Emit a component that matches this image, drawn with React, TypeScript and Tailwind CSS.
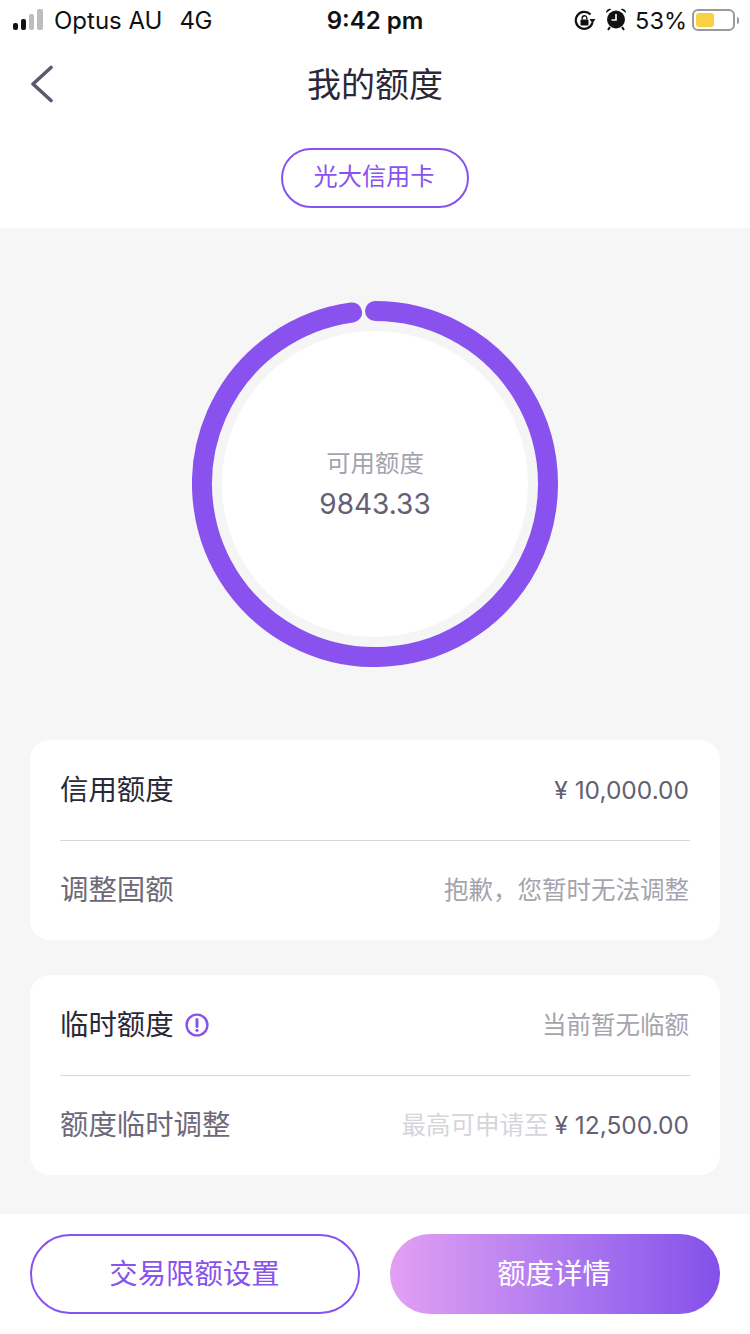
import React from "react";

const F = "font-['Inter','Noto_Sans_CJK_SC',sans-serif]";

function Ring() {
  const r = 173, c = 183;
  const a = (7.6 * Math.PI) / 180;
  const ex = c - r * Math.sin(a), ey = c - r * Math.cos(a);
  return (
    <div className="relative w-[366px] h-[366px] shrink-0 rounded-full bg-[#f5f5f5]">
      <svg width="366" height="366" viewBox="0 0 366 366" className="absolute inset-0">
        <path d={`M ${c} ${c - r} A ${r} ${r} 0 1 1 ${ex} ${ey}`} fill="none" stroke="#8952ee" strokeWidth="20" strokeLinecap="round" />
      </svg>
      <div className="absolute left-[30px] top-[30px] w-[306px] h-[306px] rounded-full bg-white flex flex-col items-center pt-[115px]">
        <div className="text-[24.4px] leading-[34px] text-[#a5a3ad]">可用额度</div>
        <div className="text-[28px] leading-[34px] mt-[7px] text-[#645f75]">9843.33</div>
      </div>
    </div>
  );
}

function Row({ left, right, muted, h }: { left: React.ReactNode; right: React.ReactNode; muted?: boolean; h: string }) {
  return (
    <div className={`${h} flex items-center justify-between`}>
      <div className={`text-[28.4px] flex items-center ${muted ? "text-[#6d6979]" : "text-[#2b2838]"}`}>{left}</div>
      <div className="text-[24.5px] flex items-center pr-px">{right}</div>
    </div>
  );
}

export default function App() {
  return (
    <div className={`${F} w-[750px] h-[1334px] bg-[#f6f6f6] flex flex-col overflow-hidden`}>
      <div className="bg-white h-[228px] shrink-0 flex flex-col">
        <div className="h-[40px] pt-[1px] pl-[13px] pr-[11px] flex items-center relative text-[24px] text-[#111]">
          <svg width="34" height="22" viewBox="0 0 34 22" className="shrink-0 -mt-[1px]">
            <rect x="0" y="14" width="5" height="7" rx="2" fill="#111" />
            <rect x="8" y="10" width="5" height="11" rx="2" fill="#111" />
            <rect x="16" y="5" width="5" height="16" rx="2" fill="#bdbdbd" />
            <rect x="24" y="0" width="6" height="21" rx="2" fill="#bdbdbd" />
          </svg>
          <span className="ml-[7px]">Optus AU</span>
          <span className="ml-[17px] tracking-[-0.5px]">4G</span>
          <span className="absolute left-0 right-0 text-center font-semibold pointer-events-none">9:42 pm</span>
          <div className="ml-auto flex items-center">
            <svg width="22" height="22" viewBox="0 0 22 22">
              <path d="M18.5 12.5 A8.5 8.5 0 1 1 16.5 4.5" fill="none" stroke="#111" strokeWidth="2.2" />
              <path d="M21.5 9 L15.5 9 L18.5 13.5 Z" fill="#111" />
              <rect x="6.5" y="9.5" width="8" height="6" rx="1" fill="#111" />
              <path d="M8.2 9.5 V8 a2.3 2.3 0 0 1 4.6 0 V9.5" fill="none" stroke="#111" strokeWidth="1.4" />
            </svg>
            <svg width="22" height="24" viewBox="0 0 22 24" className="ml-[9px] -mt-[3px]">
              <circle cx="11" cy="12.5" r="9" fill="#111" />
              <path d="M11 7 V13 H6.5" fill="none" stroke="#fff" strokeWidth="1.6" />
              <path d="M1 6 A4 4 0 0 1 6.5 2 Z M21 6 A4 4 0 0 0 15.5 2 Z" fill="#111" />
              <path d="M5 20 L3 23 M17 20 L19 23" stroke="#111" strokeWidth="2" />
            </svg>
            <span className="ml-[8px] text-[23.5px]">53%</span>
            <div className="ml-[5px] w-[43px] h-[22px] rounded-[6px] border-2 border-[#9a9a9a] p-[2px] -mt-[1px]">
              <div className="w-[18px] h-full rounded-[3px] bg-[#f8cf45]" />
            </div>
            <div className="ml-[2px] w-[2px] h-[7px] bg-[#9a9a9a] rounded-r" />
          </div>
        </div>
        <div className="h-[88px] flex items-center justify-center relative">
          <svg width="24" height="38" viewBox="0 0 24 38" className="absolute left-[30px] top-[25px]">
            <path d="M21 2.5 L3 19 L21 35.5" fill="none" stroke="#5e5870" strokeWidth="3.6" strokeLinecap="round" strokeLinejoin="round" />
          </svg>
          <div className="text-[34px] text-[#2b2838]">我的额度</div>
        </div>
        <div className="flex justify-center pt-[20px]">
          <div className="w-[188px] h-[60px] rounded-full border-2 border-[#8952ee] text-[#8952ee] text-[24.2px] pr-[2px] pb-[1px] flex items-center justify-center">光大信用卡</div>
        </div>
      </div>
      <div className="flex-1 flex flex-col items-center pt-[73px] px-[30px]">
        <Ring />
        <div className="mt-[73px] w-full flex flex-col gap-[35px]">
          <div className="bg-white rounded-[20px] px-[30px]">
            <Row h="h-[100px]" left="信用额度" right={<span className="text-[#645f75]">¥ 10,000.00</span>} />
            <div className="h-px bg-[#d9d9d9]" />
            <Row h="h-[99px]" muted left="调整固额" right={<span className="text-[#a5a3ad]">抱歉，您暂时无法调整</span>} />
          </div>
          <div className="bg-white rounded-[20px] px-[30px]">
            <Row
              h="h-[100px]"
              left={
                <>
                  临时额度
                  <svg width="24" height="24" viewBox="0 0 24 24" className="ml-[11px]">
                    <circle cx="12" cy="12" r="10.4" fill="none" stroke="#8952ee" strokeWidth="2.4" />
                    <path d="M12 6.5 V13.5" stroke="#8952ee" strokeWidth="3" strokeLinecap="round" />
                    <circle cx="12" cy="17.3" r="1.6" fill="#8952ee" />
                  </svg>
                </>
              }
              right={<span className="text-[#a5a3ad]">当前暂无临额</span>}
            />
            <div className="h-px bg-[#d9d9d9]" />
            <Row
              h="h-[99px]"
              muted
              left="额度临时调整"
              right={
                <>
                  <span className="text-[#d6d5da]">最高可申请至</span>
                  <span className="text-[#645f75] ml-[6px]">¥ 12,500.00</span>
                </>
              }
            />
          </div>
        </div>
      </div>
      <div className="h-[120px] shrink-0 bg-white px-[30px] pt-[20px] flex gap-[30px]">
        <div className="w-[330px] h-[80px] rounded-full border-2 border-[#8952ee] text-[#8952ee] text-[28.4px] pr-px flex items-center justify-center">交易限额设置</div>
        <div className="w-[330px] h-[80px] rounded-full bg-gradient-to-r from-[#e3a0f3] to-[#8450ea] text-white text-[28.4px] pr-[2px] flex items-center justify-center">额度详情</div>
      </div>
    </div>
  );
}
